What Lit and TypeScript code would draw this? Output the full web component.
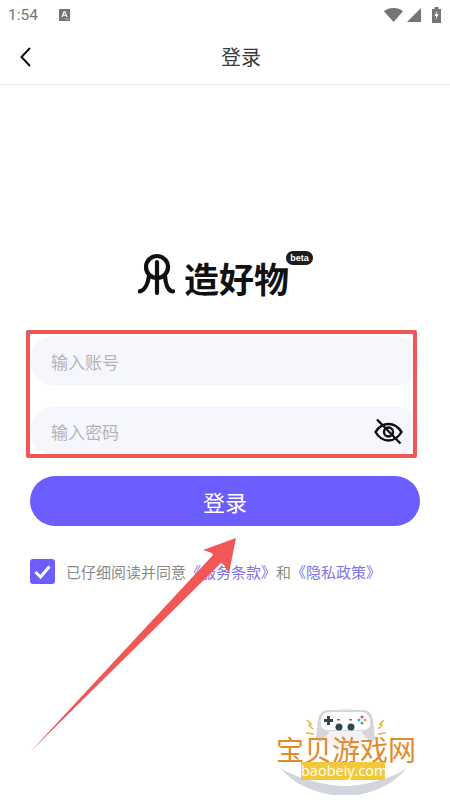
import {html, css, LitElement} from 'lit';
import {customElement} from 'lit/decorators.js';

const CJK = `"Noto Sans CJK SC", "Noto Sans", sans-serif`;

@customElement('app-root')
export class AppRoot extends LitElement {
  static styles = css`
    :host {
      display: block;
      position: relative;
      width: 450px;
      height: 800px;
      overflow: hidden;
      background: #fff;
      font-family: "Noto Sans CJK SC", "Noto Sans", sans-serif;
    }

    .status {
      display: flex;
      align-items: center;
      height: 30px;
      padding: 0 8px;
      color: #757575;
    }
    .status__time {
      font: 15.5px Roboto, sans-serif;
      width: 51px;
    }
    .status__right {
      margin-left: auto;
      display: flex;
      align-items: center;
    }
    svg {
      display: block;
      flex: none;
    }

    .nav {
      display: flex;
      align-items: center;
      height: 55px;
      padding: 0 0 0 20px;
      box-sizing: border-box;
      border-bottom: 1px solid #e8e8e8;
    }
    .nav__title {
      width: 40px;
      margin-left: 190px;
      font-size: 20px;
      line-height: 26px;
      color: #3a3a3a;
      white-space: nowrap;
    }

    .logo {
      display: flex;
      align-items: flex-start;
      height: 44px;
      margin: 168px 0 0 138px;
    }
    .logo__text {
      margin: 5px 0 0 9px;
      font-size: 35px;
      line-height: 40px;
      font-weight: 700;
      color: #111;
      letter-spacing: 0;
      white-space: nowrap;
    }
    .logo__beta {
      width: 27px;
      height: 14px;
      margin: -2px 0 0 -3px;
      border-radius: 7px;
      background: #1c1c1c;
      color: #fff;
      font: 700 9px/14px "Liberation Sans", sans-serif;
      text-align: center;
    }

    .form {
      display: flex;
      flex-direction: column;
      gap: 20px;
      margin: 39px 0 0 30px;
      width: 390px;
    }
    .field {
      display: flex;
      align-items: center;
      justify-content: space-between;
      height: 50px;
      padding: 0 17px 0 21px;
      box-sizing: border-box;
      border-radius: 25px;
      background: #f6f6fd;
      color: #b4b4b8;
      font-size: 17px;
    }
    .submit {
      height: 50px;
      border-radius: 25px;
      background: #6c5dfe;
      color: #fff;
      font-size: 22px;
      line-height: 50px;
      text-align: center;
    }

    .terms {
      display: flex;
      align-items: center;
      gap: 11px;
      margin: 33px 0 0 30px;
      font-size: 15px;
      color: #8a8a8a;
      white-space: nowrap;
    }
    .terms__box {
      display: flex;
      align-items: center;
      justify-content: center;
      width: 25px;
      height: 25px;
      border-radius: 3px;
      background: #6c5dfe;
    }
    .terms__link {
      color: #7f73e8;
    }

    .annotation {
      position: absolute;
      left: 26px;
      top: 330px;
      width: 391px;
      height: 128px;
      box-sizing: border-box;
      border: 4px solid #ef5656;
      border-radius: 2px;
    }
    .arrow {
      position: absolute;
      left: 0;
      top: 0;
    }

    .mark {
      position: absolute;
      left: 270px;
      top: 700px;
      width: 150px;
      height: 95px;
    }
    .mark__pad {
      position: absolute;
      left: 0;
      top: 0;
    }
    .mark__name {
      position: absolute;
      left: 6px;
      top: 30px;
      font-size: 28px;
      line-height: 38px;
      color: #e38a2c;
      white-space: nowrap;
    }
    .mark__url {
      position: absolute;
      left: 31px;
      top: 62px;
      width: 84px;
      height: 18px;
      background: #f2c93b;
      color: #fff;
      font: 14.5px/18px "Open Sans", sans-serif;
      text-align: center;
    }
  `;

  render() {
    return html`
      <div class="status">
        <span class="status__time">1:54</span>
        <svg width="11" height="12" viewBox="0 0 11 12">
          <path fill="#757575" d="M0 0h11v12H0z"/>
          <path fill="#fff" d="M4.6 2.2h1.8l2.2 5.8H7.3l-.4-1.2H4.1L3.7 8H2.4zM4.5 5.7h2L5.5 3.2z"/>
          <path fill="#bbb" d="M6 9.5h4v1H6z"/>
        </svg>
        <div class="status__right">
          <svg width="19" height="14" viewBox="0 0 19 14" style="margin-right:4px">
            <path fill="#757575" d="M0 3.2C2.5 1.1 5.8 0 9.500 0S16.500 1.100 19 3.200L9.500 14z"/>
          </svg>
          <svg width="14" height="14" viewBox="0 0 14 14" style="margin-right:11px">
            <path fill="#757575" d="M14 0v14H0z"/>
          </svg>
          <svg width="9" height="16" viewBox="0 0 9 16" style="margin-right:1px">
            <path fill="#757575" d="M0 2h2.500V0h4v2H9v14H0z"/>
            <path fill="#fff" d="M5.200 3.500 2.500 9h1.800L3.600 13l3-6H4.700z"/>
          </svg>
        </div>
      </div>

      <div class="nav">
        <svg width="11" height="20" viewBox="0 0 11 20">
          <path fill="none" stroke="#111" stroke-width="2" d="M10 1 1.500 10 10 19"/>
        </svg>
        <span class="nav__title">登录</span>
      </div>

      <div class="logo">
        <svg width="37" height="42" viewBox="0 0 37 42">
          <g fill="none" stroke="#111" stroke-width="4.200" stroke-linecap="round">
            <circle cx="19" cy="14" r="11"/>
            <path d="M19 9v14"/>
            <path d="M11 23c-1 7-3 13-8 15-1 .4-1.500 .3-1.500 .3"/>
            <path d="M19 23v17"/>
            <path d="M27 23c.5 7 2 13 6 15 1 .4 2 .3 2 .3"/>
          </g>
        </svg>
        <span class="logo__text">造好物</span>
        <span class="logo__beta">beta</span>
      </div>

      <div class="form">
        <div class="field"><span>输入账号</span></div>
        <div class="field">
          <span>输入密码</span>
          <svg width="29" height="27" viewBox="0 0 29 27">
            <g fill="none" stroke="#111" stroke-width="2.400">
              <path d="M1.500 14C5 8.500 9.500 6 14.500 6S24 8.500 27.500 14C24 20 19.500 22.500 14.500 22.500S5 20 1.500 14z"/>
              <circle cx="14.500" cy="14" r="4.500"/>
              <path d="M3 1.500 26.500 25.500"/>
            </g>
          </svg>
        </div>
        <div class="submit">登录</div>
      </div>

      <div class="terms">
        <span class="terms__box">
          <svg width="17" height="14" viewBox="0 0 17 14">
            <path fill="none" stroke="#fff" stroke-width="3" d="M1.500 7 6.500 12 15.500 1.500"/>
          </svg>
        </span>
        <span>已仔细阅读并同意<span class="terms__link">《服务条款》</span>和<span class="terms__link">《隐私政策》</span></span>
      </div>

      <div class="annotation"></div>

      <svg class="arrow" width="450" height="800" viewBox="0 0 450 800">
        <path fill="#f25757" d="M30 752 213 555 212 553 203 550 236 538 229 573 224 565 221 563z"/>
      </svg>

      <div class="mark">
        <svg class="mark__pad" width="150" height="95" viewBox="0 0 150 95">
          <path fill="#d3d5de" d="M10 68C30 80 60 86 75 86S120 80 137 68C122 86 98 96 75 96S25 86 10 68z"/>
          <circle cx="76" cy="30" r="22" fill="#f2f2f2"/>
          <path fill="#d4d6dc" d="M58 10h35c6 0 9 4 10 10l2 18c0 3-4 5-7 2l-7-9H60l-7 9c-3 3-7 1-7-2l2-18c1-6 4-10 10-10z"/>
          <path fill="#fff" d="M60 12h31c5 0 8 3 9 8v6c-2 4-6 5-10 4H61c-4 1-8 0-10-4v-6c1-5 4-8 9-8z"/>
          <path fill="#2f4654" d="M57 16h3v3h3v3h-3v3h-3v-3h-3v-3h3z"/>
          <circle cx="69" cy="27" r="3.500" fill="#2f4654"/>
          <circle cx="81" cy="27" r="3.500" fill="#2f4654"/>
          <path fill="#d9534f" d="M67 19h3v1.500h-3zM79 19h3v1.500h-3z"/>
          <circle cx="92" cy="17" r="1.500" fill="#d9534f"/>
          <circle cx="92" cy="23" r="1.500" fill="#4aa3c7"/>
          <circle cx="89" cy="20" r="1.500" fill="#4aa3c7"/>
          <circle cx="95" cy="20" r="1.500" fill="#e2a93b"/>
          <g fill="none" stroke="#e8b23f" stroke-width="1.500">
            <path d="M37 20 41 24 39 25 43 29"/>
            <path d="M36 33 44 34"/>
            <path d="M114 20 110 24 112 25 108 29"/>
            <path d="M116 33 108 34"/>
          </g>
        </svg>
        <span class="mark__name">宝贝游戏网</span>
        <span class="mark__url">baobeiy.com</span>
      </div>
    `;
  }
}
void CJK;

declare global {
  interface HTMLElementTagNameMap {
    'app-root': AppRoot
  }
}
